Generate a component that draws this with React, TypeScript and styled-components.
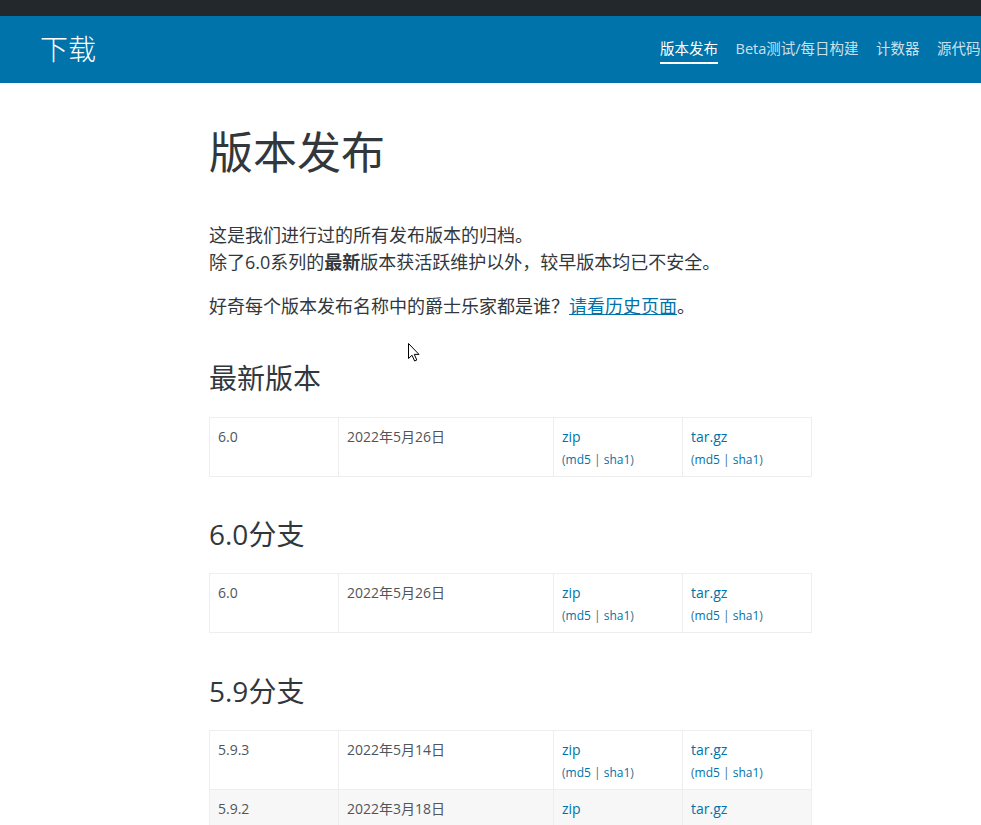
import React from 'react'
import styled, {createGlobalStyle} from 'styled-components'

const GlobalStyle = createGlobalStyle`
  html, body {
    margin: 0;
    padding: 0;
    background: #fff;
    overflow: hidden;
  }
  body {
    font-family: "Open Sans", "Noto Sans CJK SC", sans-serif;
    color: #32373c;
  }
`

interface IRelease {
  version: string
  date: string
}

interface IBranch {
  title: string
  releases: IRelease[]
}

const branches: IBranch[] = [
  {title: '最新版本', releases: [{version: '6.0', date: '2022年5月26日'}]},
  {title: '6.0分支', releases: [{version: '6.0', date: '2022年5月26日'}]},
  {
    title: '5.9分支',
    releases: [
      {version: '5.9.3', date: '2022年5月14日'},
      {version: '5.9.2', date: '2022年3月18日'},
      {version: '5.9.1', date: '2022年2月22日'},
    ],
  },
]

const navItems = ['版本发布', 'Beta测试/每日构建', '计数器', '源代码', '归档']

const Cursor = () => (
  <CursorWrap>
    <svg width="13" height="19" viewBox="0 0 13 19">
      <path
        d="M0.5 0.5 L0.5 15.5 L4 12.2 L6.6 18 L8.8 17 L6.3 11.4 L11 11.4 Z"
        fill="#fff"
        stroke="#000"
        strokeWidth="1"
        strokeLinejoin="round"
      />
    </svg>
  </CursorWrap>
)

const FileCell: React.FC<{kind: string}> = ({kind}) => (
  <Cell>
    <FileLink href="#">{kind}</FileLink>
    <Sums>
      (<a href="#">md5</a> | <a href="#">sha1</a>)
    </Sums>
  </Cell>
)

const App: React.FC = () => {
  return (
    <Page>
      <GlobalStyle />
      <AdminBar />
      <Header>
        <SiteTitle>下载</SiteTitle>
        <Nav>
          {navItems.map((item, i) => (
            <NavItem key={item} active={i === 0}>
              {item}
            </NavItem>
          ))}
        </Nav>
      </Header>
      <Main>
        <Title>版本发布</Title>
        <Intro>
          这是我们进行过的所有发布版本的归档。
          <br />
          除了6.0系列的<strong>最新</strong>版本获活跃维护以外，较早版本均已不安全。
        </Intro>
        <Intro>
          好奇每个版本发布名称中的爵士乐家都是谁？<a href="#">请看历史页面</a>。
        </Intro>
        {branches.map(branch => (
          <section key={branch.title}>
            <BranchTitle>{branch.title}</BranchTitle>
            <ReleaseTable>
              <colgroup>
                <col style={{width: 129}} />
                <col style={{width: 215}} />
                <col style={{width: 129}} />
                <col style={{width: 129}} />
              </colgroup>
              <tbody>
                {branch.releases.map(r => (
                  <Row key={r.version}>
                    <Cell>{r.version}</Cell>
                    <Cell>{r.date}</Cell>
                    <FileCell kind="zip" />
                    <FileCell kind="tar.gz" />
                  </Row>
                ))}
              </tbody>
            </ReleaseTable>
          </section>
        ))}
      </Main>
      <Cursor />
    </Page>
  )
}

const Page = styled.div`
  position: relative;
  width: 981px;
  height: 825px;
  overflow: hidden;
`

const AdminBar = styled.div`
  height: 16px;
  background: #23282d;
`

const Header = styled.header`
  height: 67px;
  background: #0073aa;
  display: flex;
  align-items: center;
  padding-left: 40px;
  white-space: nowrap;
`

const SiteTitle = styled.div`
  font-size: 28px;
  font-weight: 300;
  color: #fff;
  line-height: 1;
  flex: 0 0 auto;
  margin-top: -1px;
`

const Nav = styled.nav`
  display: flex;
  gap: 17.5px;
  margin-left: 564px;
  flex: 0 0 auto;
`

const NavItem = styled.a<{active: boolean}>`
  font-size: 14.5px;
  line-height: 20px;
  color: ${props => props.active ? '#fff' : 'rgba(255, 255, 255, 0.8)'};
  padding-bottom: 3px;
  border-bottom: 2px solid ${props => props.active ? '#fff' : 'transparent'};
  margin-top: 3px;
  text-decoration: none;
  cursor: pointer;
`

const Main = styled.main`
  padding: 42px 0 0 209px;
  width: 602px;
`

const Title = styled.h1`
  font-size: 44px;
  font-weight: 400;
  line-height: 54px;
  margin: 0 0 43px;
  color: #32373c;
`

const Intro = styled.p`
  font-size: 18px;
  line-height: 27px;
  margin: 0 0 17px;
  a {
    color: #0073aa;
    text-decoration: underline;
  }
  strong {
    font-weight: 700;
  }
`

const BranchTitle = styled.h2`
  font-size: 28px;
  font-weight: 400;
  line-height: 36px;
  margin: 39.5px 0 21px;
  color: #32373c;
`

const ReleaseTable = styled.table`
  width: 602px;
  table-layout: fixed;
  border-collapse: collapse;
  border: 1px solid #eee;
`

const Row = styled.tr`
  &:nth-child(even) {
    background: #f7f7f7;
  }
`

const Cell = styled.td`
  border: 1px solid #eee;
  padding: 8px 8px 6px 8px;
  vertical-align: top;
  font-size: 14px;
  line-height: 22px;
  color: #50555a;
`

const FileLink = styled.a`
  display: block;
  font-size: 14px;
  line-height: 22px;
  color: #0073aa;
  text-decoration: none;
`

const Sums = styled.div`
  margin-top: 2px;
  font-size: 12px;
  line-height: 20px;
  color: #3a6f8c;
  a {
    color: #0073aa;
    text-decoration: none;
  }
`

const CursorWrap = styled.div`
  position: absolute;
  left: 408px;
  top: 343px;
  width: 13px;
  height: 19px;
  pointer-events: none;
`

export default App
